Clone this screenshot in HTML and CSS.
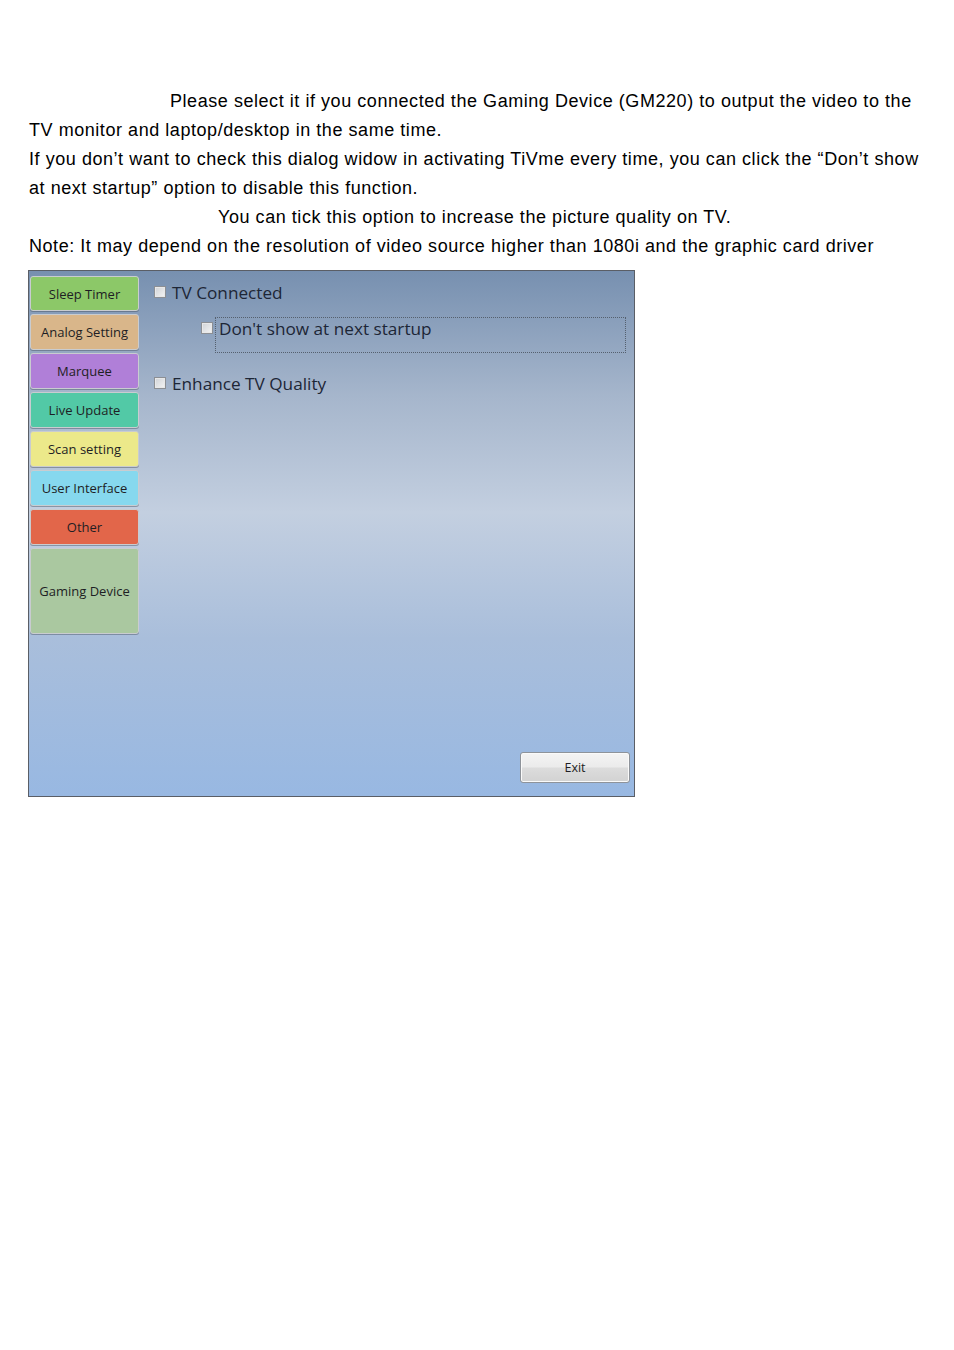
FILE: index.html
```html
<!DOCTYPE html>
<html>
<head>
<meta charset="utf-8">
<link rel="stylesheet" href="styles.css">
</head>
<body>
<div class="doc">
  <p class="para"><span class="indent1"></span>Please select it if you connected the Gaming Device (GM220) to output the video to the<br>TV monitor and laptop/desktop in the same time.</p>
  <p class="para">If you don’t want to check this dialog widow in activating TiVme every time, you can click the “Don’t show<br>at next startup” option to disable this function.</p>
  <p class="para"><span class="indent2"></span>You can tick this option to increase the picture quality on TV.</p>
  <p class="para">Note: It may depend on the resolution of video source higher than 1080i and the graphic card driver</p>
</div>
<div class="panel">
  <div class="sidebar">
    <div class="tab sleep">Sleep Timer</div>
    <div class="tab analog">Analog Setting</div>
    <div class="tab marquee">Marquee</div>
    <div class="tab live">Live Update</div>
    <div class="tab scan">Scan setting</div>
    <div class="tab ui">User Interface</div>
    <div class="tab other">Other</div>
    <div class="tab gaming">Gaming Device</div>
  </div>
  <div class="content">
    <div class="row"><span class="check"></span><span class="label">TV Connected</span></div>
    <div class="row sub"><span class="check"></span><span class="focus"><span class="label">Don't show at next startup</span></span></div>
    <div class="row enhance"><span class="check"></span><span class="label">Enhance TV Quality</span></div>
    <div class="exit">Exit</div>
  </div>
</div>
</body>
</html>
```

FILE: styles.css
```css
html, body {
  margin: 0;
  padding: 0;
  background: #ffffff;
}

.doc {
  padding: 87px 0 0 29px;
  font-family: "Liberation Sans", Arial, sans-serif;
  font-size: 18px;
  letter-spacing: 0.55px;
  line-height: 29px;
  color: #000;
}

.para {
  margin: 0;
  white-space: nowrap;
}

.indent1 {
  display: inline-block;
  width: 141px;
}

.indent2 {
  display: inline-block;
  width: 189px;
}

.panel {
  margin: 9px 0 0 28px;
  width: 607px;
  height: 527px;
  box-sizing: border-box;
  border: 1px solid #5a5e66;
  display: flex;
  background: linear-gradient(to bottom, #7790b0 0%, #a6b6cc 24%, #c3cfe0 46%, #a9bedb 70%, #98b8e2 100%);
  font-family: "Open Sans", "Noto Sans", sans-serif;
}

.sidebar {
  width: 110px;
  box-sizing: border-box;
  padding: 5px 0 0 1px;
  display: flex;
  flex-direction: column;
  gap: 3px;
}

.tab {
  height: 36px;
  box-sizing: border-box;
  border: 1px solid #c9ccd0;
  border-radius: 3px;
  box-shadow: 0 1px 0 rgba(70, 80, 95, 0.45);
  display: flex;
  align-items: center;
  justify-content: center;
  font-size: 13px;
  color: #1e1e24;
}

.sleep { background: #8cc868; height: 35px; }
.analog { background: #d9b68a; }
.marquee { background: #b07fd8; }
.live { background: #52c9a6; }
.scan { background: #ece98a; }
.ui { background: #86d8ee; }
.other { background: #e2664a; }
.gaming { background: #aac8a0; height: 86px; }

.content {
  flex: 1;
  display: flex;
  flex-direction: column;
  padding: 9px 4px 13px 15px;
}

.row {
  display: flex;
  align-items: center;
  height: 24px;
}

.check {
  width: 12px;
  height: 12px;
  box-sizing: border-box;
  border: 1px solid #8c8f94;
  background: linear-gradient(135deg, #cfd2d6 0%, #f4f4f4 100%);
  box-shadow: inset 0 0 0 1px #e8e8e8;
  flex: none;
}

.label {
  font-size: 17.2px;
  color: #1d2636;
  margin-left: 6px;
}

.sub {
  margin: 13px 0 0 47px;
  height: 36px;
  align-items: flex-start;
}

.sub .check {
  margin-top: 5px;
}

.focus {
  margin-left: 2px;
  width: 411px;
  height: 36px;
  box-sizing: border-box;
  border: 1px dotted #55606e;
  display: flex;
  align-items: flex-start;
}

.focus .label {
  margin-left: 3px;
  line-height: 22px;
  margin-top: 0;
}

.enhance {
  margin-top: 18px;
}

.exit {
  margin-top: auto;
  align-self: flex-end;
  width: 110px;
  height: 31px;
  box-sizing: border-box;
  border: 1px solid #8e939a;
  border-radius: 3px;
  background: linear-gradient(to bottom, #f4f4f4 0%, #ebebeb 48%, #dcdcdc 52%, #d2d2d2 100%);
  box-shadow: inset 0 0 0 1px #fafafa;
  display: flex;
  align-items: center;
  justify-content: center;
  font-size: 12.5px;
  color: #1e1e24;
}
```
